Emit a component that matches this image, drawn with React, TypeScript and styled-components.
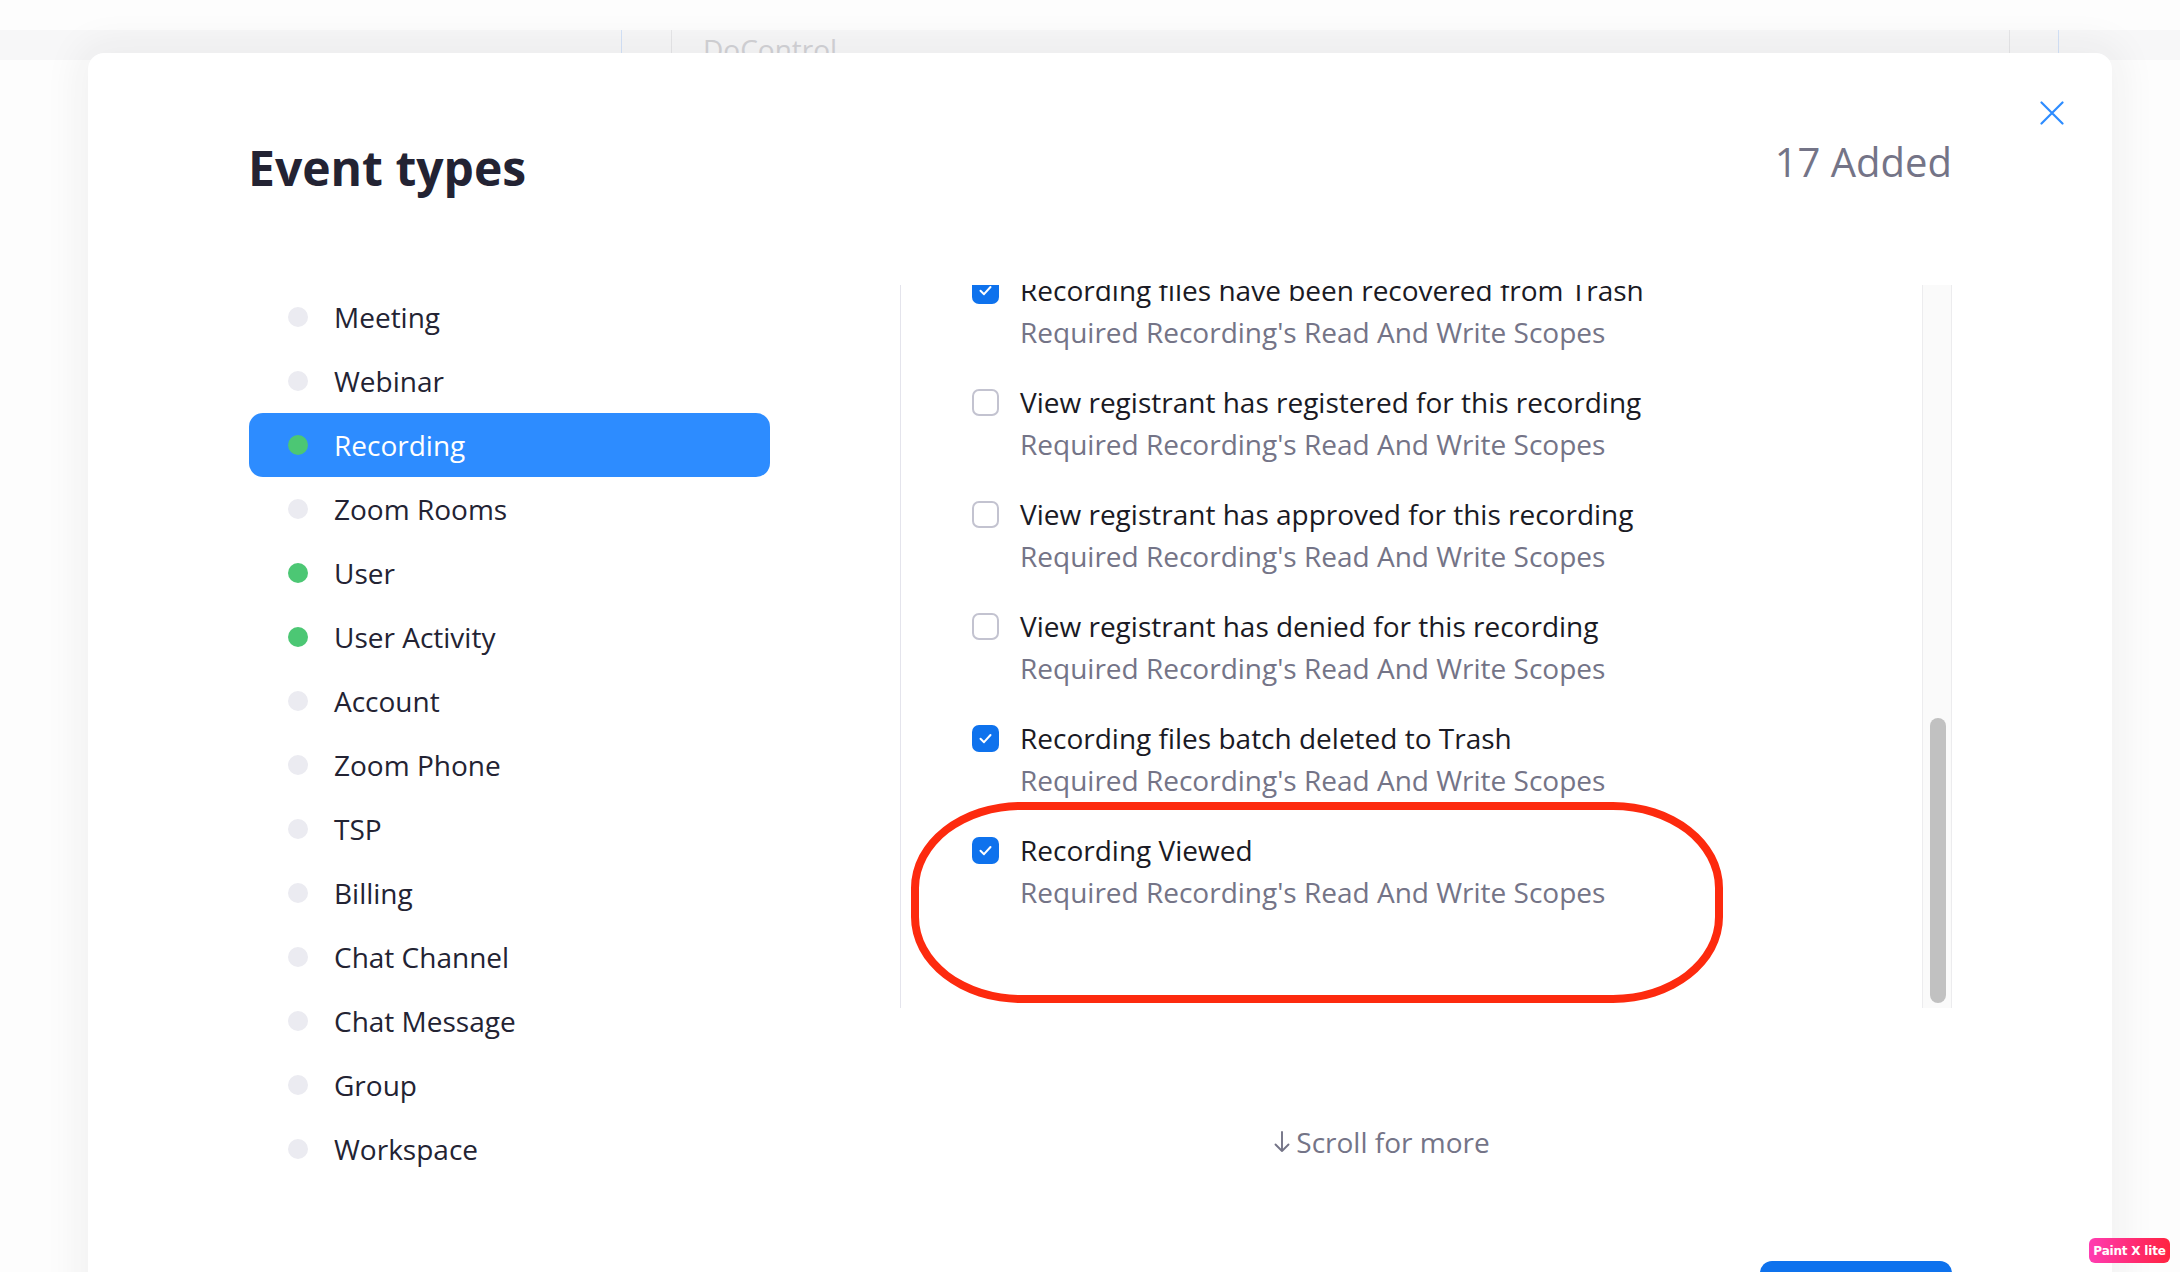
import React, { useLayoutEffect, useRef, useState } from "react";
import styled, { createGlobalStyle } from "styled-components";

const GlobalStyle = createGlobalStyle`
  html, body {
    margin: 0;
    padding: 0;
    width: 2180px;
    height: 1272px;
    overflow: hidden;
    background: #fdfdfd;
  }
  body {
    font-family: "Open Sans", "Noto Sans", sans-serif;
  }
  * { box-sizing: border-box; }
`;

const Page = styled.div`
  position: relative;
  width: 2180px;
  height: 1272px;
  overflow: hidden;
  background: #fdfdfd;
`;

const BackTableHead = styled.div`
  margin-top: 30px;
  height: 30px;
  background: #f7f7f8;
  display: grid;
  grid-template-columns: 621px 50px 1338px 49px 1fr;
`;

const BackCell = styled.div<{ $line?: "blue" | "gray" }>`
  border-left: ${(p) =>
    p.$line === "blue" ? "1px solid #d3e2f8" : p.$line === "gray" ? "1px solid #e6e6e8" : "none"};
  color: #d2d2d6;
  font-size: 28px;
  line-height: 38px;
  padding-left: 31px;
  white-space: nowrap;
`;

const Modal = styled.section`
  position: absolute;
  left: 88px;
  top: 53px;
  width: 2024px;
  height: 1280px;
  background: #ffffff;
  border-radius: 16px;
  box-shadow: 0 0 38px 10px rgba(30, 30, 45, 0.055);
  padding: 82px 160px 0 161px;
  display: flex;
  flex-direction: column;
`;

const CloseButton = styled.button`
  position: absolute;
  top: 48px;
  right: 48px;
  width: 24px;
  height: 24px;
  padding: 0;
  border: none;
  background: transparent;
  display: flex;
  align-items: center;
  justify-content: center;
  cursor: pointer;
`;

const Header = styled.header`
  display: flex;
  justify-content: space-between;
  align-items: flex-start;
  height: 65px;
`;

const Title = styled.h1`
  margin: 0 0 0 -1px;
  padding-top: 1px;
  font-size: 48px;
  line-height: 64px;
  font-weight: 700;
  color: #232333;
`;

const AddedCount = styled.div`
  font-size: 40px;
  line-height: 54px;
  font-weight: 400;
  color: #747487;
`;

const Body = styled.div`
  margin-top: 85px;
  display: grid;
  grid-template-columns: 521px 1052px;
  column-gap: 130px;
  align-items: start;
`;

const Nav = styled.nav`
  display: flex;
  flex-direction: column;
`;

const NavItem = styled.div<{ $active?: boolean }>`
  height: 64px;
  display: flex;
  align-items: center;
  gap: 26px;
  padding-left: 39px;
  border-radius: 14px;
  background: ${(p) => (p.$active ? "#2d8cff" : "transparent")};
  color: ${(p) => (p.$active ? "#ffffff" : "#232333")};
  font-size: 28px;
  line-height: 38px;
  cursor: pointer;
`;

const Dot = styled.span<{ $on?: boolean }>`
  width: 20px;
  height: 20px;
  border-radius: 50%;
  flex: none;
  background: ${(p) => (p.$on ? "#4cc774" : "#ebebf1")};
`;

const RightColumn = styled.div`
  position: relative;
  display: flex;
  flex-direction: column;
`;

const ScrollPanel = styled.div`
  height: 723px;
  overflow-y: auto;
  border-left: 1px solid #e4e4ec;
  scrollbar-width: none;
  &::-webkit-scrollbar {
    display: none;
  }
`;

const ScrollTrack = styled.div`
  position: absolute;
  top: 0;
  right: 0;
  width: 30px;
  height: 723px;
  background: #fafafa;
  border-left: 1px solid #ececee;
  border-right: 1px solid #ececee;
  pointer-events: none;
`;

const ScrollThumb = styled.div`
  position: absolute;
  left: 7px;
  width: 16px;
  border-radius: 8px;
  background: #c1c1c1;
`;

const EventList = styled.div`
  padding: 24px 0 67px 71px;
`;

const EventItem = styled.label`
  display: grid;
  grid-template-columns: 27px 1fr;
  column-gap: 21px;
  height: 112px;
  align-content: start;
  cursor: pointer;
`;

const Box = styled.span<{ $checked?: boolean }>`
  grid-row: 1;
  align-self: center;
  width: 27px;
  height: 27px;
  border-radius: 7px;
  display: flex;
  align-items: center;
  justify-content: center;
  background: ${(p) => (p.$checked ? "#0e72ed" : "#ffffff")};
  border: ${(p) => (p.$checked ? "none" : "2px solid #c3c3d0")};
`;

const EventTitle = styled.span`
  grid-row: 1;
  grid-column: 2;
  font-size: 28px;
  line-height: 42px;
  color: #1a1a24;
  white-space: nowrap;
`;

const EventScope = styled.span`
  grid-row: 2;
  grid-column: 2;
  font-size: 28px;
  line-height: 42px;
  color: #747487;
  white-space: nowrap;
`;

const Annotation = styled.div`
  position: absolute;
  left: 11px;
  top: 517px;
  width: 812px;
  height: 201px;
  border: 8px solid #fd2a0e;
  border-radius: 110px / 86px;
  pointer-events: none;
`;

const ScrollHint = styled.div`
  margin-top: 115px;
  padding-right: 88px;
  display: flex;
  align-items: center;
  justify-content: center;
  gap: 6px;
  font-size: 28px;
  line-height: 38px;
  color: #747487;
`;

const Footer = styled.footer`
  margin-top: 80px;
  display: flex;
  justify-content: flex-end;
`;

const PrimaryButton = styled.button`
  width: 192px;
  height: 56px;
  border: none;
  border-radius: 12px;
  background: #0e72ed;
  color: #ffffff;
  font-family: "Open Sans", sans-serif;
  font-size: 24px;
  font-weight: 600;
`;

const Badge = styled.div`
  position: absolute;
  left: 2089px;
  top: 1238px;
  width: 81px;
  height: 25px;
  border-radius: 6px;
  background: linear-gradient(90deg, #ff3db2 0%, #ff2a6e 60%, #ff2440 100%);
  color: #ffffff;
  font-family: "DejaVu Sans", "Liberation Sans", sans-serif;
  font-weight: 700;
  font-size: 12px;
  letter-spacing: -0.2px;
  display: flex;
  align-items: center;
  justify-content: center;
`;

const navItems: { label: string; on?: boolean; active?: boolean }[] = [
  { label: "Meeting" },
  { label: "Webinar" },
  { label: "Recording", on: true, active: true },
  { label: "Zoom Rooms" },
  { label: "User", on: true },
  { label: "User Activity", on: true },
  { label: "Account" },
  { label: "Zoom Phone" },
  { label: "TSP" },
  { label: "Billing" },
  { label: "Chat Channel" },
  { label: "Chat Message" },
  { label: "Group" },
  { label: "Workspace" },
];

const scope = "Required Recording's Read And Write Scopes";

const events: { title: string; checked: boolean }[] = [
  { title: "Start Recording", checked: true },
  { title: "Recording Paused", checked: true },
  { title: "Recording Resumed", checked: true },
  { title: "Stop Recording", checked: true },
  { title: "All Recordings have completed", checked: true },
  { title: "Recording transcript files have completed", checked: false },
  { title: "Recordings have been deleted to Trash", checked: true },
  { title: "Recordings have been deleted permanently", checked: true },
  { title: "Recordings have been recovered from Trash", checked: true },
  { title: "Recording files have been recovered from Trash", checked: true },
  { title: "View registrant has registered for this recording", checked: false },
  { title: "View registrant has approved for this recording", checked: false },
  { title: "View registrant has denied for this recording", checked: false },
  { title: "Recording files batch deleted to Trash", checked: true },
  { title: "Recording Viewed", checked: true },
];

const CheckMark = () => (
  <svg width="17" height="17" viewBox="0 0 17 17" fill="none">
    <path d="M3.5 8.8 L7 12.2 L13.5 5" stroke="#ffffff" strokeWidth="2" strokeLinecap="round" strokeLinejoin="round" />
  </svg>
);

const CloseIcon = () => (
  <svg width="24" height="24" viewBox="0 0 24 24" fill="none">
    <path d="M1.5 1.5 L22.5 22.5 M22.5 1.5 L1.5 22.5" stroke="#2d8cff" strokeWidth="2.2" strokeLinecap="round" />
  </svg>
);

const ArrowDown = () => (
  <svg width="16" height="22" viewBox="0 0 16 22" fill="none">
    <path d="M8 1 V20 M1.5 13.5 L8 20 L14.5 13.5" stroke="#747487" strokeWidth="1.9" strokeLinecap="round" strokeLinejoin="round" />
  </svg>
);

export default function App() {
  const scrollRef = useRef<HTMLDivElement>(null);
  const [thumb, setThumb] = useState({ top: 432, height: 286 });

  useLayoutEffect(() => {
    const el = scrollRef.current;
    if (!el) return;
    el.scrollTop = el.scrollHeight;
    const track = el.clientHeight;
    const ratio = el.clientHeight / el.scrollHeight;
    const len = track * ratio;
    const top = (el.scrollTop / el.scrollHeight) * track;
    setThumb({ top: top + 5, height: len - 10 });
  }, []);

  return (
    <Page>
      <GlobalStyle />
      <BackTableHead>
        <BackCell />
        <BackCell $line="blue" />
        <BackCell $line="gray">DoControl</BackCell>
        <BackCell $line="gray" />
        <BackCell $line="blue" />
      </BackTableHead>

      <Modal role="dialog" aria-label="Event types">
        <CloseButton aria-label="Close">
          <CloseIcon />
        </CloseButton>
        <Header>
          <Title>Event types</Title>
          <AddedCount>17 Added</AddedCount>
        </Header>

        <Body>
          <Nav>
            {navItems.map((n) => (
              <NavItem key={n.label} $active={n.active}>
                <Dot $on={n.on} />
                {n.label}
              </NavItem>
            ))}
          </Nav>

          <RightColumn>
            <ScrollPanel ref={scrollRef}>
              <EventList>
                {events.map((e) => (
                  <EventItem key={e.title}>
                    <Box $checked={e.checked}>{e.checked && <CheckMark />}</Box>
                    <EventTitle>{e.title}</EventTitle>
                    <EventScope>{scope}</EventScope>
                  </EventItem>
                ))}
              </EventList>
            </ScrollPanel>
            <ScrollTrack>
              <ScrollThumb style={{ top: thumb.top, height: thumb.height }} />
            </ScrollTrack>
            <Annotation />
            <ScrollHint>
              <ArrowDown />
              <span>Scroll for more</span>
            </ScrollHint>
          </RightColumn>
        </Body>

        <Footer>
          <PrimaryButton>Done</PrimaryButton>
        </Footer>
      </Modal>

      <Badge>Paint X lite</Badge>
    </Page>
  );
}
